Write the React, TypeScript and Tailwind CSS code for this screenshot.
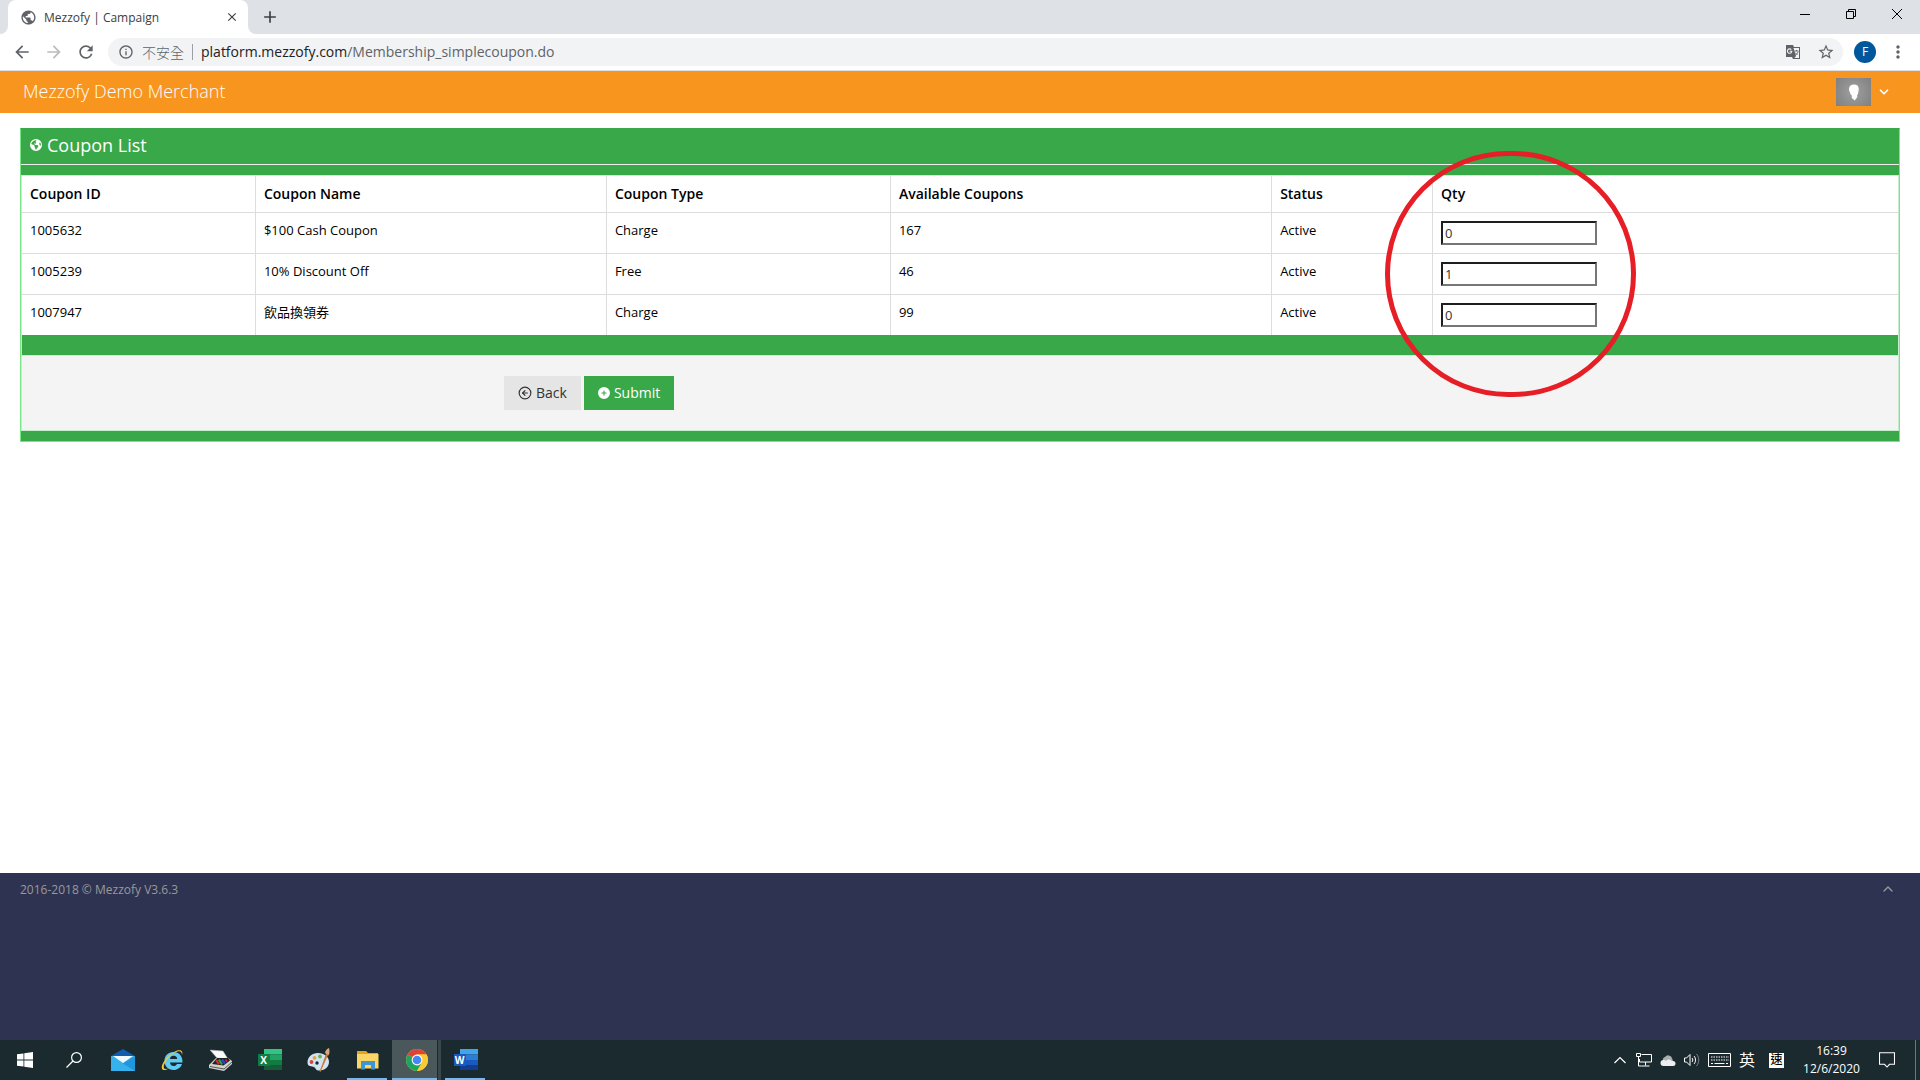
import React from "react";
import {
  MdArrowBack,
  MdArrowForward,
  MdRefresh,
  MdInfoOutline,
  MdStarBorder,
  MdMoreVert,
  MdPublic,
  MdClose,
  MdAdd,
} from "react-icons/md";
import { FaEarthAmericas, FaCirclePlus } from "react-icons/fa6";
import { ChevronDown, ChevronUp, CircleArrowLeft } from "lucide-react";

const coupons = [
  { id: "1005632", name: "$100 Cash Coupon", type: "Charge", available: "167", status: "Active", qty: "0" },
  { id: "1005239", name: "10% Discount Off", type: "Free", available: "46", status: "Active", qty: "1" },
  { id: "1007947", name: "飲品換領券", type: "Charge", available: "99", status: "Active", qty: "0" },
];

function TabStrip() {
  return (
    <div className="flex h-[34px] items-stretch bg-[#dee1e6] text-[#3c4043]">
      <div className="flex w-2 items-end bg-white">
        <span className="h-full w-2 rounded-br-lg bg-[#dee1e6]" />
      </div>
      <div className="flex w-60 items-center rounded-t-lg bg-white pr-2 pl-3">
        <MdPublic className="size-[17px] text-[#5f6368]" />
        <span className="ml-[7px] flex-1 pt-0.5 text-xs">Mezzofy | Campaign</span>
        <button aria-label="Close tab" className="flex size-4 items-center justify-center">
          <MdClose className="size-3.5" />
        </button>
      </div>
      <div className="flex w-2 items-end bg-white">
        <span className="h-full w-2 rounded-bl-lg bg-[#dee1e6]" />
      </div>
      <button aria-label="New tab" className="ml-1 flex items-center">
        <MdAdd className="size-5" />
      </button>
      <div className="ml-auto flex h-7 text-black">
        <button aria-label="Minimize" className="flex w-[46px] items-center justify-center">
          <svg viewBox="0 0 10 10" className="size-2.5" fill="none" stroke="currentColor">
            <path d="M0 5.5h10" />
          </svg>
        </button>
        <button aria-label="Restore" className="flex w-[46px] items-center justify-center">
          <svg viewBox="0 0 10 10" className="size-2.5" fill="none" stroke="currentColor">
            <path d="M.5 2.5h7v7h-7zM2.500 2.500v-2h7v7h-2" />
          </svg>
        </button>
        <button aria-label="Close" className="flex w-[46px] items-center justify-center">
          <svg viewBox="0 0 10 10" className="size-2.5" fill="none" stroke="currentColor">
            <path d="M0 0l10 10M10 0L0 10" />
          </svg>
        </button>
      </div>
    </div>
  );
}

function Toolbar() {
  return (
    <div className="flex h-[37px] items-center border-b border-[#dcdfe3] bg-white px-3 text-[#5f6368]">
      <button aria-label="Back">
        <MdArrowBack className="size-5" />
      </button>
      <button aria-label="Forward" className="ml-3 text-[#babcbe]">
        <MdArrowForward className="size-5" />
      </button>
      <button aria-label="Reload" className="ml-3">
        <MdRefresh className="size-5" />
      </button>
      <div className="ml-3 flex h-7 flex-1 items-center rounded-full bg-[#f1f3f4] pr-2 pl-2.5 text-sm">
        <MdInfoOutline className="size-4" />
        <span className="ml-2 font-['Noto_Sans_CJK_TC',sans-serif] font-light">不安全</span>
        <span className="mx-2 h-4 w-px bg-[#9aa0a6]" />
        <span className="font-['Open_Sans',sans-serif]">
          <span className="text-[#202124]">platform.mezzofy.com</span>/Membership_simplecoupon.do
        </span>
        <button aria-label="Translate this page" className="ml-auto">
          <svg viewBox="0 0 16 16" className="size-4">
            <path d="M1 1h7l1 2h6v12H8l-1-2H1z" fill="#5f6368" />
            <path d="M8.500 4h5.500v10H9.500L11 12z" fill="#f1f3f4" />
            <path d="M9.500 7h4M11.500 6v1M10 8.500l2.500 2.500M13 7.500c-.5 2-1.500 3-2.500 3.500" stroke="#5f6368" strokeWidth=".9" fill="none" />
            <path d="M6.300 5.700A2.200 2.200 0 1 0 6.800 7.300H4.700" stroke="#f1f3f4" strokeWidth="1.100" fill="none" />
          </svg>
        </button>
        <button aria-label="Bookmark this page" className="ml-4">
          <MdStarBorder className="size-[18px]" />
        </button>
      </div>
      <button
        aria-label="Profile"
        className="ml-[11px] flex size-[22px] items-center justify-center rounded-full bg-[#01579b] text-xs text-white"
      >
        F
      </button>
      <button aria-label="Menu" className="ml-3">
        <MdMoreVert className="size-5" />
      </button>
    </div>
  );
}

function MerchantBar() {
  return (
    <header className="flex h-[42px] items-center bg-[#f8951e] pr-[29px] pl-[23px] text-white">
      <a href="#" className="flex-1 pb-0.5 text-lg font-light">
        Mezzofy Demo Merchant
      </a>
      <button aria-label="Account" className="flex items-center gap-1.5">
        <span className="flex h-7 w-[35px] items-center justify-center bg-[radial-gradient(circle,#a0a0a0,#7f7f7f)]">
          <svg viewBox="0 0 12 18" className="h-[17px] w-3" fill="#fff">
            <path d="M6 .5c3.200 0 5 1.500 5 4.500 0 2-.4 3-.6 4.500-.2 1.400-.7 1.900-1.200 2.500l.3 1.800-2.700 3.700-3.300-3 .4-2C2.300 11.500 2 10 1.600 8.500.8 7.500.6 6 .8 4.500 1.200 1.500 3.500.5 6 .5z" />
          </svg>
        </span>
        <ChevronDown className="size-3.5" strokeWidth={3} />
      </button>
    </header>
  );
}

function CouponPanel() {
  const head = "border-r border-b border-[#ddd] p-2 text-left text-sm leading-5 font-semibold";
  const cell = "border-r border-b border-[#ddd] p-2 text-[13px] leading-[18px] group-last:border-b-0";
  return (
    <section className="border border-[#77e588] border-t-[#38a848] bg-[#38a848]">
      <h1 className="flex h-9 items-center gap-[5px] border-b border-[#eeeeee] pb-1 pl-[9px] text-lg text-white">
        <FaEarthAmericas className="size-3" />
        Coupon List
      </h1>
      <form className="pt-2.5 pb-2.5" onSubmit={(e) => e.preventDefault()}>
        <div className="border-x border-t border-[#c5efcb] bg-white text-black">
          <table className="w-full table-fixed border-separate border-spacing-0">
            <thead>
              <tr>
                <th className={`${head} w-[12.47%]`}>Coupon ID</th>
                <th className={`${head} w-[18.71%]`}>Coupon Name</th>
                <th className={`${head} w-[15.14%]`}>Coupon Type</th>
                <th className={`${head} w-[20.32%]`}>Available Coupons</th>
                <th className={`${head} w-[8.58%]`}>Status</th>
                <th className="relative border-b border-[#ddd] p-2 text-left text-sm leading-5 font-semibold">
                  Qty
                  <span className="pointer-events-none absolute -top-[25px] -left-12 h-[246px] w-[251px] rounded-full border-5 border-[#e61e26]" />
                </th>
              </tr>
            </thead>
            <tbody>
              {coupons.map((c) => (
                <tr key={c.id} className="group align-top">
                  <td className={cell}>{c.id}</td>
                  <td className={cell}>{c.name}</td>
                  <td className={cell}>{c.type}</td>
                  <td className={cell}>{c.available}</td>
                  <td className={cell}>{c.status}</td>
                  <td className="border-b border-[#ddd] p-2 group-last:border-b-0">
                    <input
                      type="text"
                      defaultValue={c.qty}
                      aria-label={`Qty for ${c.name}`}
                      className="block h-6 w-[156px] border-2 border-t-[#1e1e1e] border-r-[#767676] border-b-[#767676] border-l-[#1e1e1e] bg-white px-0.5 text-[13px] text-[#333]"
                    />
                  </td>
                </tr>
              ))}
            </tbody>
          </table>
          <div className="h-5 bg-[#38a848]" />
        </div>
        <div className="border border-[#c5efcb] bg-[#f4f4f4] py-5">
          <div className="ml-[25%] flex gap-[3px] pl-[13px] text-sm leading-5">
            <button type="button" className="flex items-center gap-1 bg-[#e5e5e5] px-3.5 py-[7px] text-[#333]">
              <CircleArrowLeft className="size-3.5" strokeWidth={2} />
              Back
            </button>
            <button type="submit" className="flex items-center gap-1 bg-[#38a848] px-3.5 py-[7px] text-white">
              <FaCirclePlus className="size-3" />
              Submit
            </button>
          </div>
        </div>
      </form>
    </section>
  );
}

function PageFooter() {
  return (
    <footer className="flex h-[167px] items-start justify-between bg-[#2f3352] px-5 pt-2 text-xs leading-[18px] text-[#999]">
      <span>2016-2018 © Mezzofy V3.6.3</span>
      <a href="#" aria-label="Back to top" className="mr-1 flex items-center">
        <ChevronUp className="size-4" strokeWidth={2} />
      </a>
    </footer>
  );
}

function TaskButton({ label, state, children }: { label: string; state?: "open" | "active"; children?: React.ReactNode }) {
  const look =
    state === "active"
      ? "bg-[#4a575b] border-b-2 border-[#76b9ed] pt-0.5"
      : "";
  return (
    <button aria-label={label} className={`relative flex h-10 w-[49px] items-center justify-center ${look}`}>
      {children}
      {state === "open" && <span className="absolute bottom-0 left-1 h-0.5 w-10 bg-[#76b9ed]" />}
      {state === "active" && <span className="absolute top-0 right-0 -bottom-0.5 w-1 border-l border-[#1b2a2f] bg-[#39464a]" />}
    </button>
  );
}

function OfficeIcon({ letter, top, mid, low, base, plate }: Record<"letter" | "top" | "mid" | "low" | "base" | "plate", string>) {
  return (
    <span className="relative flex h-6 w-6 items-center">
      <svg viewBox="0 0 24 24" className="absolute inset-0 size-6">
        <path d="M6 1h18v5.500H6z" fill={top} />
        <path d="M6 6.500h18V12H6z" fill={mid} />
        <path d="M6 12h18v5.500H6z" fill={low} />
        <path d="M6 17.500h18V22H6z" fill={base} />
        <path d="M0 6h12v12H0z" fill={plate} />
      </svg>
      <span className="relative w-3 text-center text-[10px] leading-3 font-bold text-white">{letter}</span>
    </span>
  );
}

function Taskbar() {
  return (
    <div className="flex h-10 items-center bg-[#1b2a2f] text-white">
      <TaskButton label="Start">
        <svg viewBox="0 0 16 16" className="size-4" fill="#fff">
          <path d="M0 2.300l6.500-.9v6.200H0zM7.300 1.300L16 0v7.600H7.300zM0 8.400h6.500v6.200L0 13.700zM7.300 8.400H16V16l-8.700-1.300z" />
        </svg>
      </TaskButton>
      <TaskButton label="Search">
        <svg viewBox="0 0 16 16" className="size-4" fill="none" stroke="#fff" strokeWidth="1.200">
          <circle cx="10.500" cy="5.500" r="4.900" />
          <path d="M7 9L.5 15.500" />
        </svg>
      </TaskButton>
      <div className="flex">
        <TaskButton label="Mail">
          <svg viewBox="0 0 24 24" className="size-6">
            <path d="M0 8L12 1l12 7v2H0z" fill="#0f5cb0" />
            <path d="M0 8h24v15H0z" fill="#35b1ec" />
            <path d="M2 8h20l-10 7z" fill="#f3f8fb" />
            <path d="M0 8l24 15H0z" fill="#35b1ec" />
            <path d="M24 8L12 15.500 24 23z" fill="#1f96dd" />
          </svg>
        </TaskButton>
        <TaskButton label="Internet Explorer">
          <svg viewBox="0 0 24 24" className="size-6" fill="none">
            <path
              fillRule="evenodd"
              d="M22 16c-1.200 3.600-4.400 6-8.500 6C8.300 22 4.500 18.300 4.500 13S8.300 4 13.500 4s9.300 3.700 9 10.500H10c.3 2.300 1.600 3.600 3.800 3.600 1.500 0 2.500-.7 3-2.100zM10 11h7.200c-.2-2-1.500-3.200-3.600-3.200S10.300 9 10 11z"
              fill="#5fcaf3"
            />
            <path d="M22 7c1.500-4-1.500-6.500-7.500-3.200C6.500 8 .5 17 2 20.800c1 2.200 4.500 1.200 7.500-.8-3 1.300-5.300 1.300-5.700-.6C3 16 8.500 8.500 14.500 4.800 18.800 2.200 22 2.500 22 7z" fill="#f5c832" />
          </svg>
        </TaskButton>
        <TaskButton label="Scanner">
          <svg viewBox="0 0 24 24" className="size-6">
            <path d="M1 2l13 1 5 8-11-1z" fill="#fafafa" stroke="#aaa" strokeWidth=".5" />
            <path d="M7 10h12l4 3v3l-8 7L0 20v-3z" fill="#d2d2cd" />
            <path d="M8 10h11l2 2.500-6.500 5L3 16z" fill="#222" />
            <path d="M7 12l3 4" stroke="#d8283c" strokeWidth="2.200" />
            <path d="M10 11.500l3 5" stroke="#25a84b" strokeWidth="2.200" />
            <path d="M13 11.500l3 4" stroke="#2848e0" strokeWidth="2.200" />
            <path d="M16.500 11.500l1.500 2" stroke="#d8283c" strokeWidth="1.500" />
            <path d="M1 18.500l14 2.500 8-7" stroke="#555" fill="none" />
          </svg>
        </TaskButton>
        <TaskButton label="Excel">
          <OfficeIcon letter="X" top="#33c481" mid="#21a366" low="#107c41" base="#185c37" plate="#107c41" />
        </TaskButton>
        <TaskButton label="Paint">
          <svg viewBox="0 0 24 24" className="size-6">
            <path d="M11 5c6 0 11 3.500 11 9 0 5-4.500 8.500-10 8.500-3.500 0-3-2.500-5-3.500S.500 19 .5 14.500C.5 9 5 5 11 5z" fill="#cfe5f3" />
            <circle cx="4.500" cy="14" r="1.900" fill="#d7443e" />
            <circle cx="7.500" cy="9.800" r="1.900" fill="#e9a23b" />
            <circle cx="13" cy="8.500" r="1.900" fill="#6db33f" />
            <circle cx="10" cy="15" r="1.700" fill="#1b2a2f" />
            <path d="M19 6l2 1-7.500 17-1-.5z" fill="#cf7a35" />
            <path d="M18 5c0-2 2-4.500 4-5 .5 1.500 1 5-.5 7.500z" fill="#dba77c" />
          </svg>
        </TaskButton>
        <TaskButton label="File Explorer" state="open">
          <svg viewBox="0 0 24 24" className="size-6">
            <path d="M1 3h9l2 2h10v3H1z" fill="#e2a51e" />
            <path d="M1 6h21.500v14.500H1z" fill="#fbd667" />
            <path d="M5 13h14v8.500h-4V17H9v4.500H5z" fill="#3f95cf" />
          </svg>
        </TaskButton>
        <TaskButton label="Chrome" state="active">
          <svg viewBox="0 0 24 24" className="size-6">
            <circle cx="12" cy="12" r="11" fill="#fbc934" />
            <path d="M12 12L2.500 6.500A11 11 0 0 1 21.500 6.500H12z" fill="#dc4437" />
            <path d="M12 12L2.500 6.500A11 11 0 0 0 12 23l4.800-8.300z" fill="#1ea362" />
            <path d="M12 6.500h9.500A11 11 0 0 1 12 23l4.800-8.300z" fill="#fbc934" />
            <circle cx="12" cy="12" r="5.400" fill="#fff" />
            <circle cx="12" cy="12" r="4.300" fill="#4587f3" />
          </svg>
        </TaskButton>
        <TaskButton label="Word" state="open">
          <OfficeIcon letter="W" top="#41a5ee" mid="#2b7cd3" low="#185abd" base="#103f91" plate="#185abd" />
        </TaskButton>
      </div>

      <div className="ml-auto flex h-full items-center">
        <div className="flex items-center gap-2">
          <svg viewBox="0 0 12 8" className="mr-0.5 h-2 w-3" fill="none" stroke="#fff" strokeWidth="1.200">
            <path d="M.5 7L6 1.500 11.500 7" />
          </svg>
          <svg viewBox="0 0 16 14" className="h-3.5 w-4" fill="none" stroke="#fff">
            <path d="M5.500 1.500h10v7.500H3.500V6M9.500 9v3.500M5.500 13h8M.5.500h4v3h-4zM2.500 3.500V13h3" />
          </svg>
          <svg viewBox="0 0 16 11" className="h-[11px] w-4">
            <path d="M3 6a3 3 0 0 1 2-4 4 4 0 0 1 7 1l1 3-8 2z" fill="#a9afb1" />
            <path d="M3.500 11a3 3 0 0 1 0-6c1 0 2 .4 2.500 1 1-2 4.500-2.300 5.800 0H13a2.500 2.500 0 0 1 0 5z" fill="#eee" />
          </svg>
          <svg viewBox="0 0 16 14" className="h-3.5 w-4" fill="none" stroke="#fff">
            <path d="M.5 5h2L6 1.500v11L2.500 9h-2zM8 5c1 1.200 1 3 0 4M10 3c2 2.200 2 6 0 8" />
            <path d="M12.500 1c3 3.500 3 8.500 0 12" stroke="#7d8688" />
          </svg>
          <svg viewBox="0 0 23 14" className="h-3.5 w-[23px]" fill="none" stroke="#fff">
            <path d="M.5.500h22v13H.5z" />
            <path d="M3 4h18M3 7h18" strokeDasharray="1.500 1" />
            <path d="M3 10.500h2M6.500 10.500h10M18 10.500h2" />
          </svg>
          <span className="text-base leading-5">英</span>
        </div>
        <span className="ml-3.5 flex size-[15px] items-center justify-center bg-white text-xs leading-none font-medium text-black">速</span>
        <time className="w-[95px] text-center text-xs leading-[18px]">
          16:39
          <br />
          12/6/2020
        </time>
        <button aria-label="Notifications" className="mr-5 flex">
          <svg viewBox="0 0 16 16" className="size-4" fill="none" stroke="#fff" strokeWidth="1.100">
            <path d="M.5.800h15v11.500H10.500L8 15l-2.500-2.700H.5z" />
          </svg>
        </button>
        <span className="mr-1 h-full w-px bg-[#6d7679]" />
      </div>
    </div>
  );
}

export default function App() {
  return (
    <div className="flex min-h-screen flex-col bg-white font-['Open_Sans','Noto_Sans_CJK_TC',sans-serif]">
      <TabStrip />
      <Toolbar />
      <MerchantBar />
      <main className="flex-1 px-5 pt-[15px]">
        <CouponPanel />
      </main>
      <PageFooter />
      <Taskbar />
    </div>
  );
}
